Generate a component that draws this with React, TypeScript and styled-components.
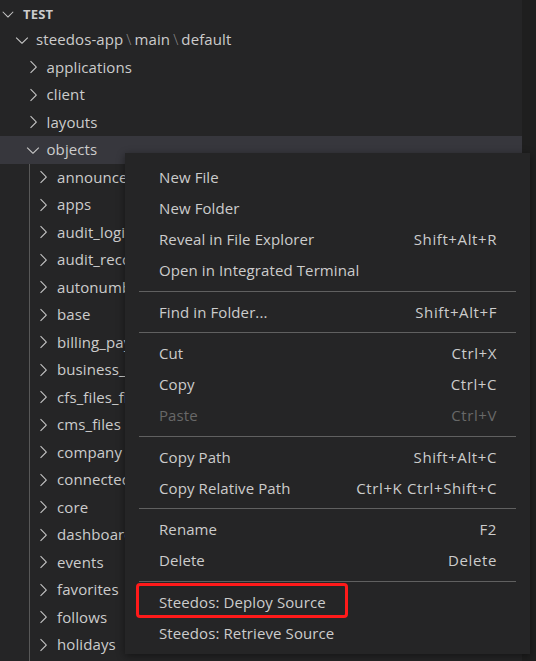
import React from "react";
import styled, { createGlobalStyle } from "styled-components";

const GlobalStyle = createGlobalStyle`
  html, body {
    margin: 0;
    padding: 0;
    background: #252526;
  }
  * { box-sizing: border-box; }
`;

const Page = styled.div`
  position: relative;
  width: 536px;
  height: 661px;
  overflow: hidden;
  display: flex;
  font-family: "Open Sans", "Noto Sans", sans-serif;
  font-size: 15px;
  color: #cccccc;
`;

const Sidebar = styled.div`
  width: 522px;
  height: 100%;
  background: #252526;
  display: flex;
  flex-direction: column;
`;

const RightStrip = styled.div`
  flex: 1;
  background: #1f1f1f;
`;

const HeaderRow = styled.div`
  height: 26px;
  flex-shrink: 0;
  display: flex;
  align-items: center;
  padding-left: 0;
  padding-top: 1px;
`;

const HeaderTitle = styled.span`
  font-weight: 700;
  font-size: 13px;
  letter-spacing: 0.2px;
  margin-left: 2px;
  color: #cccccc;
`;

const Row = styled.div<{ $pad: number; $hover?: boolean }>`
  height: 27.5px;
  flex-shrink: 0;
  display: flex;
  align-items: center;
  padding-left: ${(p) => p.$pad}px;
  background: ${(p) => (p.$hover ? "#37373d" : "transparent")};
  white-space: nowrap;
  overflow: hidden;
`;

const TwistieBox = styled.span<{ $size: number; $shift?: number }>`
  width: ${(p) => p.$size}px;
  height: ${(p) => p.$size}px;
  flex-shrink: 0;
  display: inline-flex;
  margin-left: ${(p) => p.$shift ?? 0}px;
  margin-right: 4px;
  color: #c5c5c5;
  svg { width: 100%; height: 100%; display: block; }
`;

const Label = styled.span`
  color: #cccccc;
  line-height: 1;
  letter-spacing: 0.1px;
`;

const PathSep = styled.span`
  color: #8a8a8a;
  margin: 0 3px;
  font-weight: 300;
`;

const Children = styled.div`
  margin-left: 29px;
  border-left: 1px solid #585858;
  display: flex;
  flex-direction: column;
  flex: 1;
`;

const Menu = styled.div`
  position: absolute;
  left: 125px;
  top: 153px;
  width: 405px;
  padding: 8px 0 5px;
  background: #252526;
  box-shadow: 0 2px 8px rgba(0, 0, 0, 0.45);
  display: flex;
  flex-direction: column;
`;

const MenuItem = styled.div<{ $disabled?: boolean }>`
  position: relative;
  height: 31.25px;
  flex-shrink: 0;
  display: flex;
  align-items: center;
  justify-content: space-between;
  padding: 0 33px 0 34px;
  color: ${(p) => (p.$disabled ? "#686868" : "#cccccc")};
  white-space: nowrap;
  letter-spacing: 0.1px;
`;

const Shortcut = styled.span`
  color: inherit;
  letter-spacing: 0.6px;
`;

const Separator = styled.div`
  height: 1px;
  margin: 4.5px 14px;
  background: #606060;
  flex-shrink: 0;
`;

const Highlight = styled.span`
  position: absolute;
  left: 11px;
  top: -3px;
  width: 212px;
  height: 35px;
  border: 3px solid #ff1a1a;
  border-radius: 4px;
  pointer-events: none;
`;

const ChevronRight = () => (
  <svg viewBox="0 0 16 16" fill="currentColor">
    <path d="M10.072 8.024L5.715 3.667l.618-.62L11 7.716v.618L6.333 13l-.618-.619 4.357-4.357z" />
  </svg>
);

const ChevronDown = () => (
  <svg viewBox="0 0 16 16" fill="currentColor">
    <path d="M7.976 10.072l4.357-4.357.62.618L8.284 11h-.618L3 6.333l.619-.618 4.357 4.357z" />
  </svg>
);

const topFolders = ["applications", "client", "layouts"];
const objectChildren = [
  "announcements",
  "apps",
  "audit_login",
  "audit_records",
  "autonumber",
  "base",
  "billing_pay_records",
  "business_hours",
  "cfs_files_filerecord",
  "cms_files",
  "company",
  "connected_apps",
  "core",
  "dashboard",
  "events",
  "favorites",
  "follows",
  "holidays",
];

type Entry =
  | { kind: "item"; label: string; shortcut?: string; disabled?: boolean; mark?: boolean }
  | { kind: "sep" };

const menu: Entry[] = [
  { kind: "item", label: "New File" },
  { kind: "item", label: "New Folder" },
  { kind: "item", label: "Reveal in File Explorer", shortcut: "Shift+Alt+R" },
  { kind: "item", label: "Open in Integrated Terminal" },
  { kind: "sep" },
  { kind: "item", label: "Find in Folder...", shortcut: "Shift+Alt+F" },
  { kind: "sep" },
  { kind: "item", label: "Cut", shortcut: "Ctrl+X" },
  { kind: "item", label: "Copy", shortcut: "Ctrl+C" },
  { kind: "item", label: "Paste", shortcut: "Ctrl+V", disabled: true },
  { kind: "sep" },
  { kind: "item", label: "Copy Path", shortcut: "Shift+Alt+C" },
  { kind: "item", label: "Copy Relative Path", shortcut: "Ctrl+K Ctrl+Shift+C" },
  { kind: "sep" },
  { kind: "item", label: "Rename", shortcut: "F2" },
  { kind: "item", label: "Delete", shortcut: "Delete" },
  { kind: "sep" },
  { kind: "item", label: "Steedos: Deploy Source", mark: true },
  { kind: "item", label: "Steedos: Retrieve Source" },
];

export default function App() {
  return (
    <Page>
      <GlobalStyle />
      <Sidebar>
        <HeaderRow>
          <TwistieBox $size={18} $shift={-1}>
            <ChevronDown />
          </TwistieBox>
          <HeaderTitle>TEST</HeaderTitle>
        </HeaderRow>
        <Row $pad={12}>
          <TwistieBox $size={20}>
            <ChevronDown />
          </TwistieBox>
          <Label>
            steedos-app<PathSep>\</PathSep>main<PathSep>\</PathSep>default
          </Label>
        </Row>
        {topFolders.map((f) => (
          <Row key={f} $pad={22.5}>
            <TwistieBox $size={20}>
              <ChevronRight />
            </TwistieBox>
            <Label>{f}</Label>
          </Row>
        ))}
        <Row $pad={22.5} $hover>
          <TwistieBox $size={20}>
            <ChevronDown />
          </TwistieBox>
          <Label>objects</Label>
        </Row>
        <Children>
          {objectChildren.map((f) => (
            <Row key={f} $pad={3}>
              <TwistieBox $size={20}>
                <ChevronRight />
              </TwistieBox>
              <Label>{f}</Label>
            </Row>
          ))}
        </Children>
      </Sidebar>
      <RightStrip />
      <Menu>
        {menu.map((e, i) =>
          e.kind === "sep" ? (
            <Separator key={i} />
          ) : (
            <MenuItem key={i} $disabled={e.disabled}>
              <span>{e.label}</span>
              {e.shortcut && <Shortcut>{e.shortcut}</Shortcut>}
              {e.mark && <Highlight />}
            </MenuItem>
          )
        )}
      </Menu>
    </Page>
  );
}
